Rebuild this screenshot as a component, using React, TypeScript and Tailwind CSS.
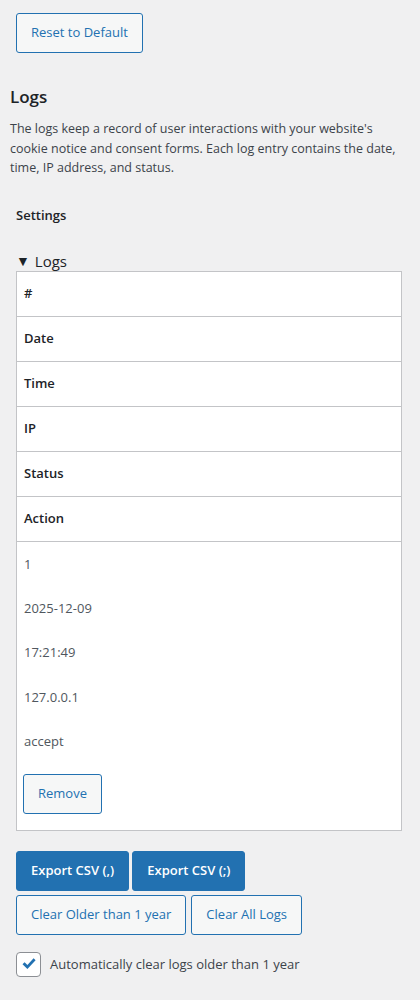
import { useState } from "react";

const headers = ["#", "Date", "Time", "IP", "Status", "Action"];
const values = ["1", "2025-12-09", "17:21:49", "127.0.0.1", "accept"];

export default function App() {
  const [autoClear, setAutoClear] = useState(true);

  return (
    <div
      className="min-h-[1000px] bg-[#f0f0f1] px-[10px] text-[13px] text-[#3c434a]"
      style={{ fontFamily: '"Open Sans", "Noto Sans", Arial, sans-serif' }}
    >
      <div className="pt-[13px] pl-[6px]">
        <button
          type="button"
          className="h-[40px] rounded-[3px] border border-[#2271b1] bg-[#f6f7f7] px-[14px] text-[13px] text-[#2271b1]"
        >
          Reset to Default
        </button>
      </div>

      <h2 className="mt-[32px] text-[17px] font-semibold leading-[24px] text-[#1d2327]">Logs</h2>
      <p className="mt-[10px] w-[390px] text-[12.5px] leading-[19.5px] text-[#3c434a]">
        The logs keep a record of user interactions with your website's cookie notice and consent
        forms. Each log entry contains the date, time, IP address, and status.
      </p>

      <div className="pl-[6px]">
        <h3 className="mt-[27px] text-[13px] font-semibold leading-[20px] text-[#1d2327]">Settings</h3>

        <div className="mt-[26px] flex items-center gap-[5px] text-[15px] leading-[20px] text-[#1d2327]">
          <span className="text-[14px] leading-none">▼</span>
          <span>Logs</span>
        </div>

        <div className="w-[386px] border border-[#c3c4c7] bg-white">
          {headers.map((h) => (
            <div
              key={h}
              className="flex h-[45px] items-center border-b border-[#c3c4c7] px-[7px] text-[13px] font-semibold text-[#1d2327]"
            >
              {h}
            </div>
          ))}
          <div className="pt-[1px] pb-[16px]">
            {values.map((v) => (
              <div key={v} className="flex h-[44.25px] items-center px-[7px] text-[13px] text-[#50575e]">
                {v}
              </div>
            ))}
            <div className="mt-[10px] px-[6px]">
              <button
                type="button"
                className="h-[40px] rounded-[3px] border border-[#2271b1] bg-[#f6f7f7] px-[14px] text-[13px] text-[#2271b1]"
              >
                Remove
              </button>
            </div>
          </div>
        </div>

        <div className="mt-[20px] flex gap-[3px]">
          <button
            type="button"
            className="h-[40px] rounded-[3px] border border-[#2271b1] bg-[#2271b1] px-[14px] text-[13px] font-semibold text-white"
          >
            Export CSV (,)
          </button>
          <button
            type="button"
            className="h-[40px] rounded-[3px] border border-[#2271b1] bg-[#2271b1] px-[14px] text-[13px] font-semibold text-white"
          >
            Export CSV (;)
          </button>
        </div>
        <div className="mt-[4px] flex gap-[5px]">
          <button
            type="button"
            className="h-[40px] rounded-[3px] border border-[#2271b1] bg-[#f6f7f7] px-[14px] text-[13px] text-[#2271b1]"
          >
            Clear Older than 1 year
          </button>
          <button
            type="button"
            className="h-[40px] rounded-[3px] border border-[#2271b1] bg-[#f6f7f7] px-[14px] text-[13px] text-[#2271b1]"
          >
            Clear All Logs
          </button>
        </div>

        <label className="mt-[17px] flex items-center gap-[9px] text-[13px] text-[#3c434a]">
          <button
            type="button"
            onClick={() => setAutoClear(!autoClear)}
            className="flex h-[25px] w-[25px] items-center justify-center rounded-[4px] border border-[#8c8f94] bg-white"
          >
            {autoClear && (
              <svg viewBox="0 0 20 20" className="h-[20px] w-[20px]" fill="#2271b1">
                <path d="M3.5 10.2 L5.6 8.2 L8.4 11 L14.6 4.2 L16.6 6.2 L8.4 15.1 Z" />
              </svg>
            )}
          </button>
          <span>Automatically clear logs older than 1 year</span>
        </label>
      </div>
    </div>
  );
}
